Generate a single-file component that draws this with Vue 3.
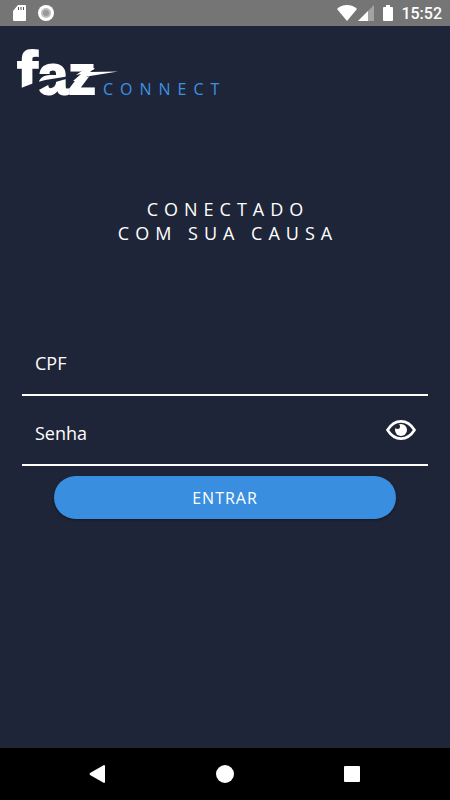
<script setup>
import { ref } from 'vue';

const cpf = ref('');
const senha = ref('');
const showSenha = ref(false);

const toggleSenha = () => {
    showSenha.value = !showSenha.value;
};
</script>

<template>
    <div class="screen">
        <div class="status-bar">
            <div class="status-group left">
                <svg viewBox="0 0 14 16" width="14" height="16"><path fill="#fff" d="M5 0H12Q13 0 13 1V15Q13 16 12 16H1Q0 16 0 15V6Z"/><path stroke="#555" stroke-width="1" d="M5.500 2V5M8 2V5M10.500 2V5"/></svg>
                <svg viewBox="0 0 16 16" width="16" height="16"><circle cx="8" cy="8" r="8" fill="#fff"/><circle cx="8" cy="8" r="5" fill="#bdbdbd"/><circle cx="8" cy="8" r="3" fill="#999"/></svg>
            </div>
            <div class="status-group">
                <svg viewBox="0 0 20 16" width="20" height="16"><path fill="#fff" d="M10 16L0 4Q4 0 10 0T20 4Z"/></svg>
                <svg class="signal" viewBox="0 0 16 16" width="16" height="16"><path fill="#a3a3a3" d="M16 0V16H0Z"/><path fill="#fff" d="M10 6V16H0Z"/></svg>
                <svg class="battery" viewBox="0 0 10 16" width="10" height="16"><path fill="#fff" d="M3 0H7V2H9Q10 2 10 3V15Q10 16 9 16H1Q0 16 0 15V3Q0 2 1 2H3Z"/></svg>
                <span class="clock">15:52</span>
            </div>
        </div>

        <main class="content">
            <div class="logo">
                <svg class="logo-faz" viewBox="0 0 102 70" width="102" height="70">
                    <text class="faz-text" x="1" y="54"><tspan class="faz-f">f</tspan>az</text>
                    <!-- dark cut through the letters -->
                    <path fill="#1f2538" d="M0 50Q10 46 18 43Q32 39 48 37L62 34L64 36Q44 40 34 44L21 51V60H0Z"/>
                    <!-- white spark -->
                    <path fill="#1f2538" d="M50 37L60 34L68 30L84 30V34L66 38Z"/>
                    <path fill="#fff" d="M70 28H79L74 32L102 31.500Q86 34 71 36.500L66 41H57L65 34L60 35Z"/>
                </svg>
                <span class="logo-connect">CONNECT</span>
            </div>

            <h1 class="slogan">CONECTADO<br>COM SUA CAUSA</h1>

            <form class="login" @submit.prevent>
                <div class="field">
                    <label for="cpf">CPF</label>
                    <input id="cpf" v-model="cpf" type="text" inputmode="numeric">
                </div>
                <div class="field">
                    <label for="senha">Senha</label>
                    <input id="senha" v-model="senha" :type="showSenha ? 'text' : 'password'">
                    <button class="btn-eye" type="button" aria-label="Mostrar senha" @click="toggleSenha">
                        <svg viewBox="0 0 30 20" width="30" height="20">
                            <path fill="none" stroke="#fff" stroke-width="2.700" stroke-linejoin="round" d="M1.500 10Q7 1.400 15 1.400T28.500 10Q23 18.600 15 18.600T1.500 10Z"/>
                            <circle cx="15" cy="10" r="6" fill="#fff"/>
                            <circle cx="11.500" cy="6.500" r="2.500" fill="#1f2538"/>
                        </svg>
                    </button>
                </div>
                <button class="btn-entrar" type="submit">ENTRAR</button>
            </form>
        </main>

        <nav class="nav-bar">
            <button type="button" aria-label="Voltar">
                <svg viewBox="0 0 18 18" width="18" height="18"><path fill="#fff" d="M1 8Q0 9 1 10L15 18Q16 18 16 17V1Q16 0 15 0Z"/></svg>
            </button>
            <button type="button" aria-label="Início">
                <svg viewBox="0 0 18 18" width="18" height="18"><circle cx="9" cy="9" r="9" fill="#fff"/></svg>
            </button>
            <button type="button" aria-label="Recentes">
                <svg viewBox="0 0 18 18" width="18" height="18"><rect x="1" y="1" width="16" height="16" rx="1" fill="#fff"/></svg>
            </button>
        </nav>
    </div>
</template>

<style>
body {
    margin: 0;
    background: #1f2538;
}
</style>

<style scoped>
.screen {
    min-height: 100vh;
    display: flex;
    flex-direction: column;
    background: #1f2538;
    color: #fff;
    font-family: 'Open Sans', 'Noto Sans', sans-serif;
}

svg {
    display: block;
}

button {
    border: none;
    padding: 0;
    background: transparent;
    color: inherit;
    font-family: inherit;
    cursor: pointer;
}

.status-bar {
    height: 26px;
    padding: 0 8px 0 13px;
    display: flex;
    align-items: center;
    justify-content: space-between;
    background: #757575;
}

.status-group {
    display: flex;
    align-items: center;
}

.status-group.left {
    gap: 11px;
}

.signal {
    margin-left: 1px;
}

.battery {
    margin-left: 9px;
}

.clock {
    margin-left: 8px;
    padding-top: 2px;
    font: 500 16px/24px Roboto, sans-serif;
}

.content {
    flex: 1;
    padding: 14px 22px;
}

.logo {
    display: flex;
    align-items: flex-end;
    margin-left: -6px;
}

.logo-faz {
    flex: none;
    margin-right: -15px;
    overflow: visible;
}

.faz-text {
    font: bold 55px 'Liberation Sans', Arial, sans-serif;
    fill: #fff;
    stroke: #fff;
    stroke-width: 2px;
}

.faz-f {
    font-size: 62px;
}

.logo-connect {
    margin-bottom: 13px;
    color: #3c92e2;
    font-size: 16px;
    font-weight: 500;
    line-height: 16px;
    letter-spacing: 7px;
}

.slogan {
    margin: 87px 0 0;
    padding-left: 6px;
    font-size: 18px;
    font-weight: 400;
    line-height: 24px;
    letter-spacing: 6px;
    text-align: center;
}

.login {
    margin-top: 81px;
    display: flex;
    flex-direction: column;
}

.field {
    height: 68px;
    padding: 0 12px 0 13px;
    display: flex;
    align-items: center;
    border-bottom: 2px solid #fff;
    font-size: 18px;
}

.field label {
    padding-top: 6px;
}

.field input {
    flex: 1;
    min-width: 0;
    margin-left: 12px;
    padding: 6px 0 0;
    border: none;
    outline: none;
    background: transparent;
    color: inherit;
    font: inherit;
}

.btn-entrar {
    height: 43px;
    margin: 10px 32px 0;
    border-radius: 22px;
    background: #3a8ee0;
    box-shadow: 0 1px 3px rgba(0, 0, 0, 0.4);
    font-size: 16px;
    letter-spacing: 1px;
}

.nav-bar {
    height: 52px;
    padding: 0 35px;
    display: flex;
    background: #000;
}

.nav-bar button {
    flex: 1;
    display: flex;
    align-items: center;
    justify-content: center;
}
</style>
